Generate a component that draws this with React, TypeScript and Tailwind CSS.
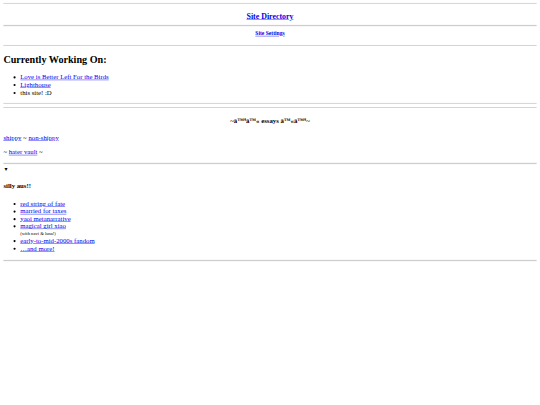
import React from "react";

const A = ({ children }: { children: React.ReactNode }) => (
  <a href="#" className="text-[#0000ee] underline">
    {children}
  </a>
);

const Hr = ({ cls }: { cls: string }) => <div className={`h-[2.37px] bg-[#cdcdcd] ${cls}`} />;

export default function App() {
  return (
    <div className="w-full h-[405px] overflow-hidden bg-white">
      <div className="flow-root w-[1280px] origin-top-left scale-[0.421875] opacity-[0.996] px-[8px] text-black font-['Liberation_Serif',serif] text-[16px]">
        <Hr cls="mt-[7px]" />
        <h3 className="mt-[17.8px] text-center text-[18.72px] leading-[21.3px] font-bold">
          <A>Site Directory</A>
        </h3>
        <Hr cls="mt-[10.7px]" />
        <h5 className="mt-[10.7px] text-center text-[13.28px] leading-[16.6px] font-bold">
          <A>Site Settings</A>
        </h5>
        <Hr cls="mt-[17.8px]" />
        <h2 className="mt-[19px] text-[24px] leading-[28.4px] font-bold">Currently Working On:</h2>
        <ul className="mt-[17.8px] list-disc pl-[40px] leading-[18.25px]">
          <li>
            <A>Love is Better Left For the Birds</A>
          </li>
          <li>
            <A>Lighthouse</A>
          </li>
          <li>this site! :D</li>
        </ul>
        <Hr cls="mt-[15.2px]" />
        <Hr cls="mt-[7.1px]" />
        <h4 className="mt-[21.3px] text-center text-[16px] leading-[19px] font-bold">
          ~â™ªâ™« essays â™«â™ª~
        </h4>
        <p className="mt-[20.6px] leading-[19px]">
          <A>shippy</A> ~ <A>non-shippy</A>
        </p>
        <p className="mt-[15.6px] leading-[19px]">
          ~ <A>hater vault</A> ~
        </p>
        <Hr cls="mt-[15.9px]" />
        <div className="mt-[4.7px] leading-[19px] text-[12px]">▼</div>
        <h4 className="mt-[19px] text-[16px] leading-[19px] font-bold">silly aus!!</h4>
        <ul className="mt-[23.7px] list-disc pl-[40px] leading-[17.8px]">
          <li>
            <A>red string of fate</A>
          </li>
          <li>
            <A>married for taxes</A>
          </li>
          <li>
            <A>yaoi metanarrative</A>
          </li>
          <li>
            <A>magical girl xiao</A>
            <div className="text-[10.9px] leading-[16.6px]">(with navi &amp; luna!)</div>
          </li>
          <li>
            <A>early-to-mid-2000s fandom</A>
          </li>
          <li>
            <A>…and more!</A>
          </li>
        </ul>
        <Hr cls="mt-[19px]" />
      </div>
    </div>
  );
}
